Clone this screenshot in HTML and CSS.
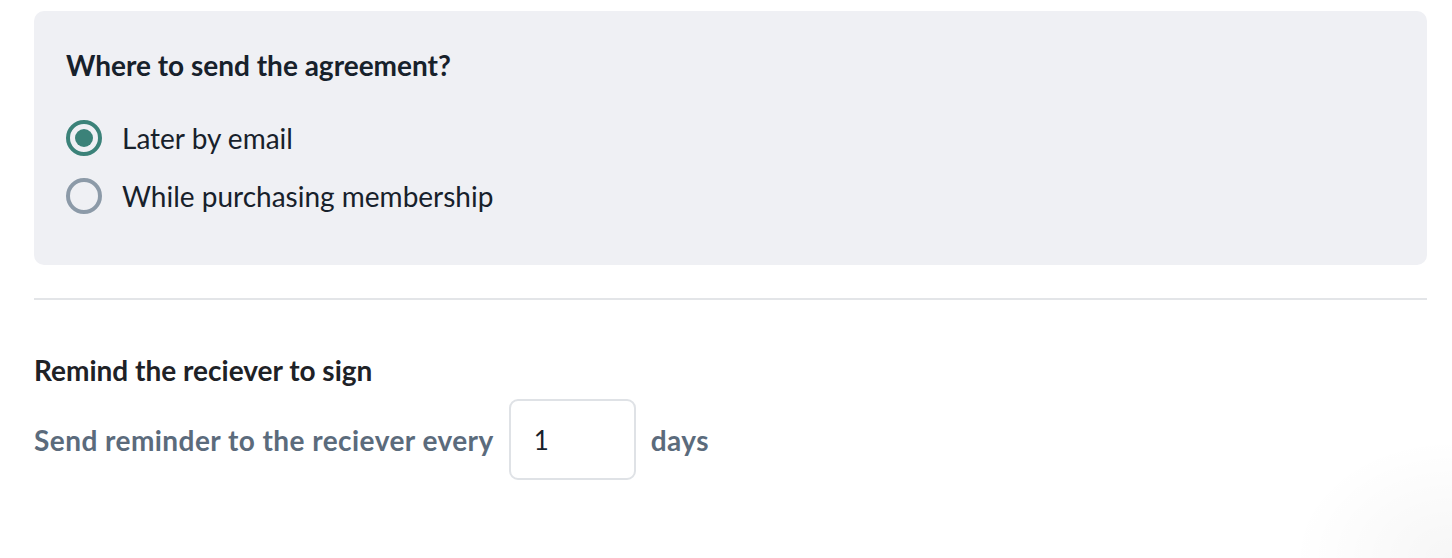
FILE: index.html
```html
<!DOCTYPE html>
<html>
<head>
<meta charset="utf-8">
<link rel="stylesheet" href="styles.css">
</head>
<body>
<div class="page">
  <section class="panel">
    <h2 class="panel-title">Where to send the agreement?</h2>
    <div class="options">
      <label class="option">
        <span class="radio checked"><span class="dot"></span></span>
        <span class="option-label">Later by email</span>
      </label>
      <label class="option">
        <span class="radio"></span>
        <span class="option-label">While purchasing membership</span>
      </label>
    </div>
  </section>
  <hr class="divider">
  <section class="remind">
    <h3 class="remind-title">Remind the reciever to sign</h3>
    <div class="remind-row">
      <span class="remind-text">Send reminder to the reciever every</span>
      <div class="num-input">1</div>
      <span class="remind-text">days</span>
    </div>
  </section>
</div>
</body>
</html>
```
FILE: styles.css
```css
* { box-sizing: border-box; }
html, body {
  margin: 0;
  padding: 0;
  background: #ffffff;
  height: 100%;
}
body {
  font-family: Lato, "Liberation Sans", sans-serif;
  color: #17212b;
  overflow: hidden;
}
.page {
  padding: 11px 25px 0 34px;
  height: 558px;
  background: radial-gradient(ellipse 160px 120px at 1452px 558px, rgba(0,0,0,0.035), rgba(0,0,0,0) 100%);
}
.panel {
  background: #eff0f4;
  border-radius: 10px;
  padding: 39px 32px 0 32px;
  height: 254px;
}
.panel-title {
  margin: 0;
  font-size: 28px;
  font-weight: 700;
  line-height: 30px;
  color: #17212b;
}
.options {
  display: flex;
  flex-direction: column;
  gap: 22px;
  margin-top: 40px;
}
.option {
  display: flex;
  align-items: center;
  gap: 20px;
  height: 36px;
}
.radio {
  width: 36px;
  height: 36px;
  border-radius: 50%;
  border: 4px solid #8c9aa8;
  display: flex;
  align-items: center;
  justify-content: center;
  flex: none;
}
.radio.checked {
  border-color: #3b8279;
}
.dot {
  width: 18px;
  height: 18px;
  border-radius: 50%;
  background: #3b8279;
}
.option-label {
  font-size: 28px;
  line-height: 32px;
  color: #17212b;
}
.divider {
  border: 0;
  height: 2px;
  background: #e3e5e8;
  margin: 33px 0 0 0;
}
.remind-title {
  margin: 55px 0 0 0;
  font-size: 28px;
  font-weight: 700;
  line-height: 30px;
  color: #1e2227;
}
.remind-row {
  display: flex;
  align-items: center;
  gap: 15px;
  margin-top: 14px;
}
.remind-text {
  font-size: 28px;
  font-weight: 700;
  letter-spacing: 0.45px;
  color: #5b6b7c;
}
.num-input {
  width: 127px;
  height: 81px;
  border: 2px solid #dfe2e6;
  border-radius: 9px;
  background: #fff;
  font-size: 26px;
  color: #17212b;
  display: flex;
  align-items: center;
  padding-left: 23px;
}
```
